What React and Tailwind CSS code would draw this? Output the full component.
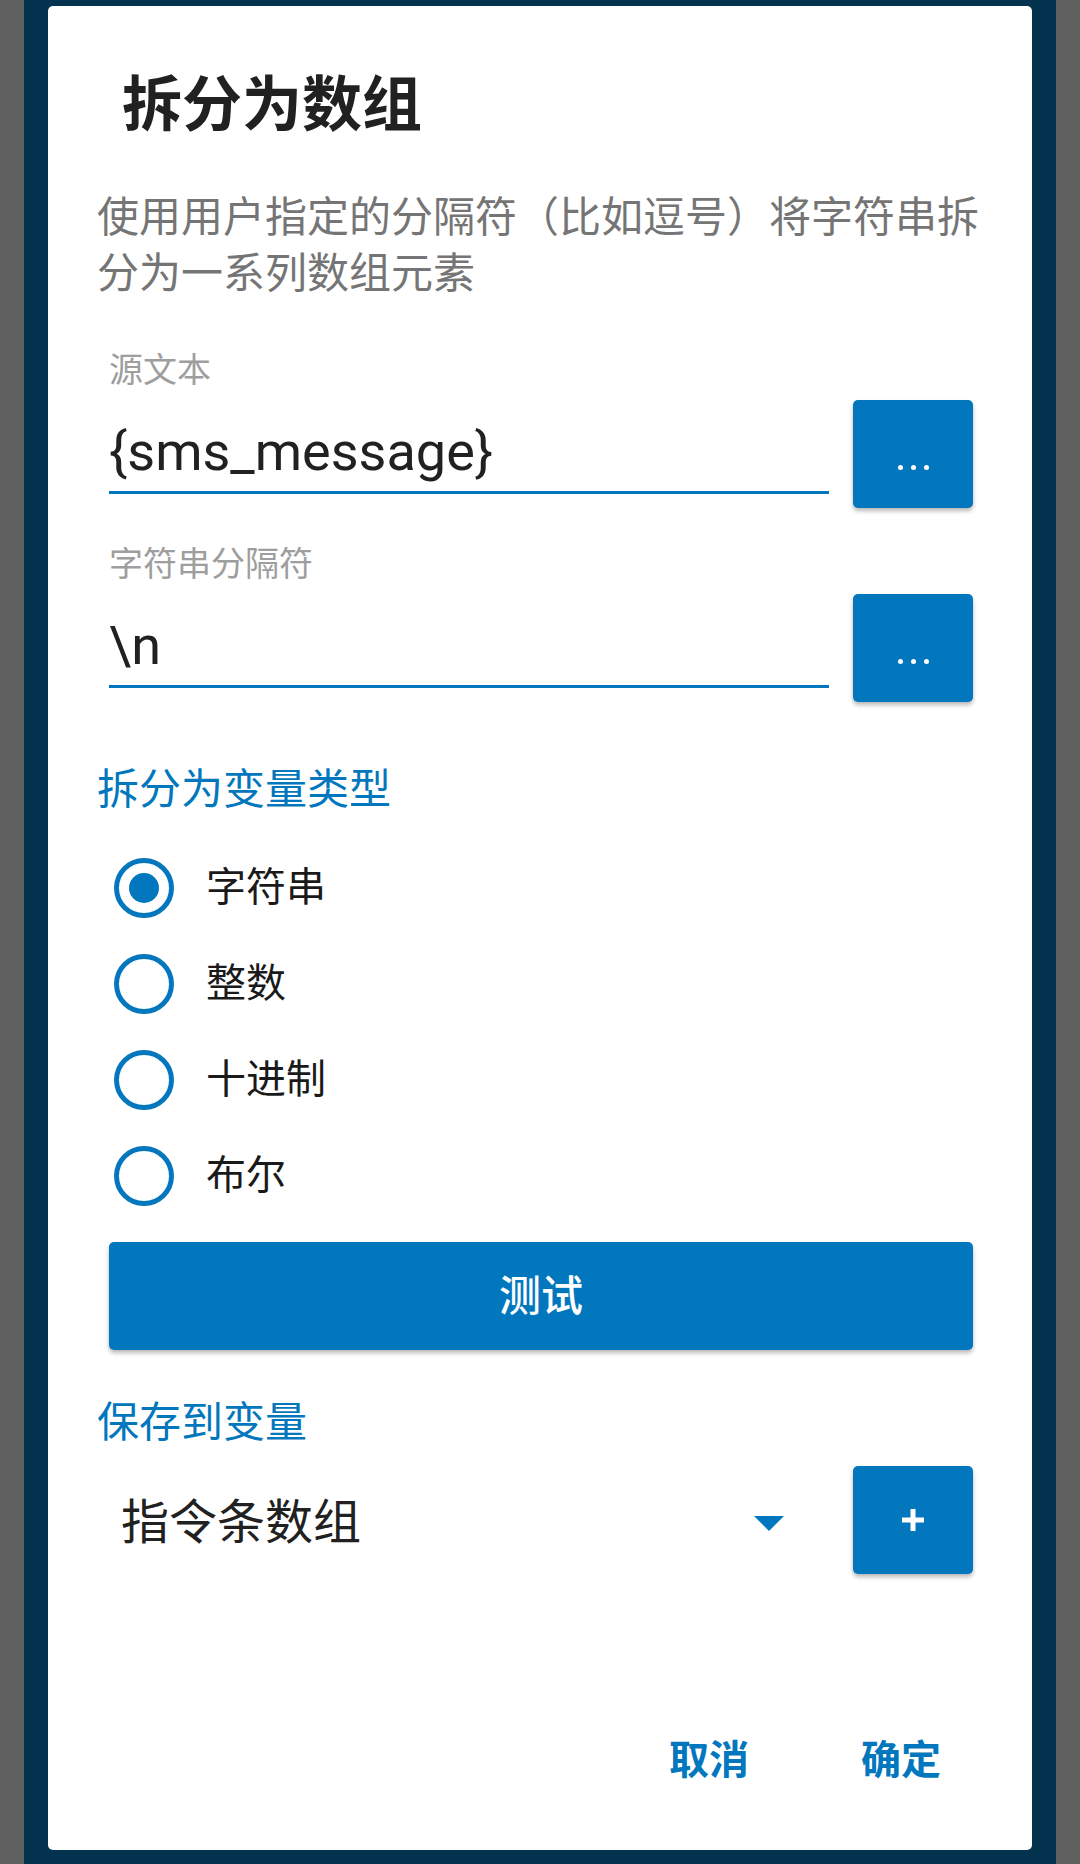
import React, { useState } from "react";

const cjk = "font-['Roboto','Noto_Sans_CJK_SC',sans-serif]";

const PickerButton = ({ children }) => (
  <button className="flex h-[108px] w-[120px] shrink-0 items-center justify-center rounded-[5px] bg-[#0277bd] text-white shadow-[0_3px_4px_rgba(0,0,0,0.28)]">
    {children}
  </button>
);

const Dots = () => (
  <span className="mt-[26px] flex gap-[8px]">
    <span className="h-[5px] w-[5px] rounded-full bg-white" />
    <span className="h-[5px] w-[5px] rounded-full bg-white" />
    <span className="h-[5px] w-[5px] rounded-full bg-white" />
  </span>
);

const TextField = ({ label, value, className = "" }) => (
  <div className={`flex items-start gap-[24px] pl-[61px] pr-[59px] ${className}`}>
    <div className="flex flex-1 flex-col">
      <div className="h-[40px] text-[34px] leading-[40px] text-[#9e9e9e]">{label}</div>
      <div className="mt-[32px] border-b-[3px] border-[#0277bd] pb-[9px] text-[54px] leading-[60px] text-[#212121]">
        {value}
      </div>
    </div>
    <div className="mt-[50px]">
      <PickerButton>
        <Dots />
      </PickerButton>
    </div>
  </div>
);

const Radio = ({ label, checked, onSelect }) => (
  <div className="flex h-[96px] items-center pl-[66px]" onClick={onSelect}>
    <span className="flex h-[60px] w-[60px] items-center justify-center rounded-full border-[5px] border-[#0277bd]">
      {checked && <span className="h-[30px] w-[30px] rounded-full bg-[#0277bd]" />}
    </span>
    <span className="ml-[32px] text-[40px] leading-[56px] text-[#1a1a1a]">{label}</span>
  </div>
);

export default function App() {
  const [type, setType] = useState("字符串");
  const types = ["字符串", "整数", "十进制", "布尔"];

  return (
    <div className={`h-[1864px] w-[1080px] bg-[#616161] px-[24px] ${cjk}`}>
      <div className="h-full bg-[#02324d] px-[24px] pt-[6px]">
        <div className="flex h-[1844px] flex-col rounded-[5px] bg-white">
          <h1 className="mt-[70px] pl-[74px] text-[60px] font-bold leading-[60px] text-[#212121]">拆分为数组</h1>

          <p className="mt-[54px] w-[935px] pl-[49px] text-[42px] leading-[56px] text-[#757575]">
            使用用户指定的分隔符（比如逗号）将字符串拆分为一系列数组元素
          </p>

          <TextField className="mt-[48px]" label="源文本" value="{sms_message}" />
          <TextField className="mt-[36px]" label="字符串分隔符" value="\n" />

          <div className="mt-[60px] pl-[49px] text-[42px] leading-[56px] text-[#0277bd]">拆分为变量类型</div>

          <div className="mt-[22px] flex flex-col">
            {types.map((t) => (
              <Radio key={t} label={t} checked={type === t} onSelect={() => setType(t)} />
            ))}
          </div>

          <div className="mt-[18px] pl-[61px] pr-[59px]">
            <button className="flex h-[108px] w-full items-center justify-center rounded-[5px] bg-[#0277bd] text-[42px] font-medium text-white shadow-[0_3px_4px_rgba(0,0,0,0.28)]">
              测试
            </button>
          </div>

          <div className="mt-[45px] pl-[49px] text-[42px] leading-[56px] text-[#0277bd]">保存到变量</div>

          <div className="mt-[15px] flex items-center pl-[61px] pr-[59px]">
            <div className="flex flex-1 items-center pl-[12px] pt-[6px]">
              <span className="flex-1 text-[48px] leading-[60px] text-[#212121]">指令条数组</span>
              <svg width="30" height="15" viewBox="0 0 30 15" className="mr-[69px]">
                <path d="M0 0 L30 0 L15 15 Z" fill="#0277bd" />
              </svg>
            </div>
            <PickerButton>
              <svg width="22" height="22" viewBox="0 0 22 22">
                <path d="M11 0 V22 M0 11 H22" stroke="white" strokeWidth="5" />
              </svg>
            </PickerButton>
          </div>

          <div className="mt-auto flex justify-end gap-[112px] pb-[61px] pr-[91px] text-[40px] font-bold leading-[56px] text-[#0277bd]">
            <button>取消</button>
            <button>确定</button>
          </div>
        </div>
      </div>
    </div>
  );
}
